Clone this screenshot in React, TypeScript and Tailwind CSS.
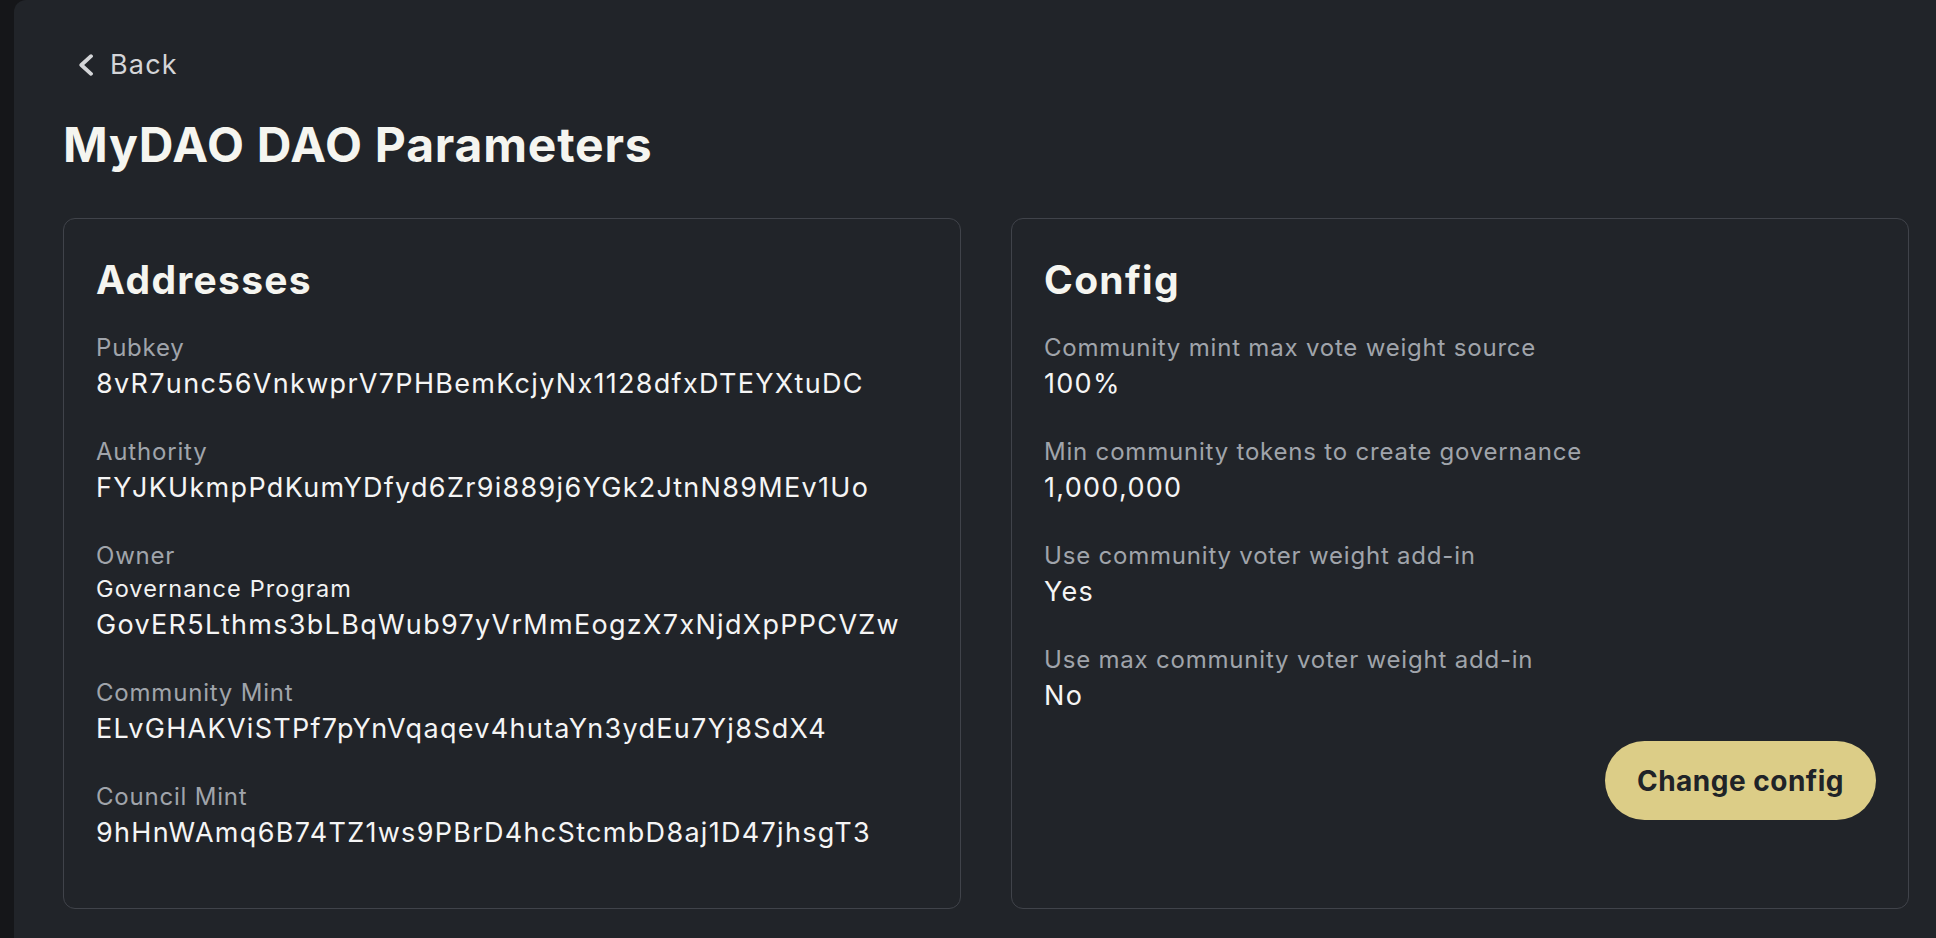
import type { ReactNode } from 'react';

// ============================================
// DAO PARAMETERS PAGE
// ============================================

const addresses = [
  { label: 'Pubkey', value: '8vR7unc56VnkwprV7PHBemKcjyNx1128dfxDTEYXtuDC' },
  { label: 'Authority', value: 'FYJKUkmpPdKumYDfyd6Zr9i889j6YGk2JtnN89MEv1Uo' },
  {
    label: 'Owner',
    sub: 'Governance Program',
    value: 'GovER5Lthms3bLBqWub97yVrMmEogzX7xNjdXpPPCVZw',
  },
  { label: 'Community Mint', value: 'ELvGHAKViSTPf7pYnVqaqev4hutaYn3ydEu7Yj8SdX4' },
  { label: 'Council Mint', value: '9hHnWAmq6B74TZ1ws9PBrD4hcStcmbD8aj1D47jhsgT3' },
];

const config = [
  { label: 'Community mint max vote weight source', value: '100%' },
  { label: 'Min community tokens to create governance', value: '1,000,000' },
  { label: 'Use community voter weight add-in', value: 'Yes' },
  { label: 'Use max community voter weight add-in', value: 'No' },
];

type ItemProps = { label: string; value: string; sub?: string };

const Item = ({ label, value, sub }: ItemProps) => (
  <div>
    <div className="text-[24px] leading-[33px] tracking-[0.8px] text-[#a0a4ab]">{label}</div>
    {sub && (
      <div className="text-[23.5px] leading-[33px] tracking-[1.1px] text-[#f2f2f2]">{sub}</div>
    )}
    <div className="text-[27px] leading-[39px] tracking-[1.3px] text-[#f5f5f5]">{value}</div>
  </div>
);

const Card = ({ title, children }: { title: string; children: ReactNode }) => (
  <div className="border border-[#40434a] rounded-[12px] px-8 pt-[37px] pb-[56px]">
    <h2 className="text-[39px] leading-[48px] font-bold tracking-[1.3px] text-[#f5f5f0] mb-[27px]">
      {title}
    </h2>
    {children}
  </div>
);

const App = () => {
  return (
    <div className="min-h-screen flex bg-[#151619] font-['Inter',sans-serif]">
      <div className="ml-[14px] flex-1 bg-[#212429] rounded-tl-[12px] pl-[49px] pr-[27px] pt-[47px] pb-[29px]">
        {/* back link */}
        <button className="flex items-center gap-[17px] h-9 pl-4 text-[27px] leading-9 tracking-[1.2px] text-[#d4d5d8]">
          <svg width="14" height="22" viewBox="0 0 14 22" fill="none">
            <polyline
              points="12,2.2 2.3,11 12,19.8"
              stroke="currentColor"
              strokeWidth="3.8"
              strokeLinecap="round"
              strokeLinejoin="round"
            />
          </svg>
          <span>Back</span>
        </button>

        <h1 className="mt-[33px] text-[48px] leading-[58px] font-bold tracking-[0.8px] text-[#f5f5f0]">
          MyDAO DAO Parameters
        </h1>

        <div className="mt-[44px] grid grid-cols-2 gap-[50px]">
          <Card title="Addresses">
            <div className="flex flex-col gap-8">
              {addresses.map((a) => (
                <Item key={a.label} {...a} />
              ))}
            </div>
          </Card>

          <Card title="Config">
            <div className="flex flex-col gap-8">
              {config.map((c) => (
                <Item key={c.label} {...c} />
              ))}
            </div>
            <div className="flex justify-end pt-[26px]">
              <button className="h-[79px] px-8 rounded-full bg-[#dccd87] text-[28px] font-bold tracking-[0.5px] text-[#202328]">
                Change config
              </button>
            </div>
          </Card>
        </div>
      </div>
    </div>
  );
};

export default App;
